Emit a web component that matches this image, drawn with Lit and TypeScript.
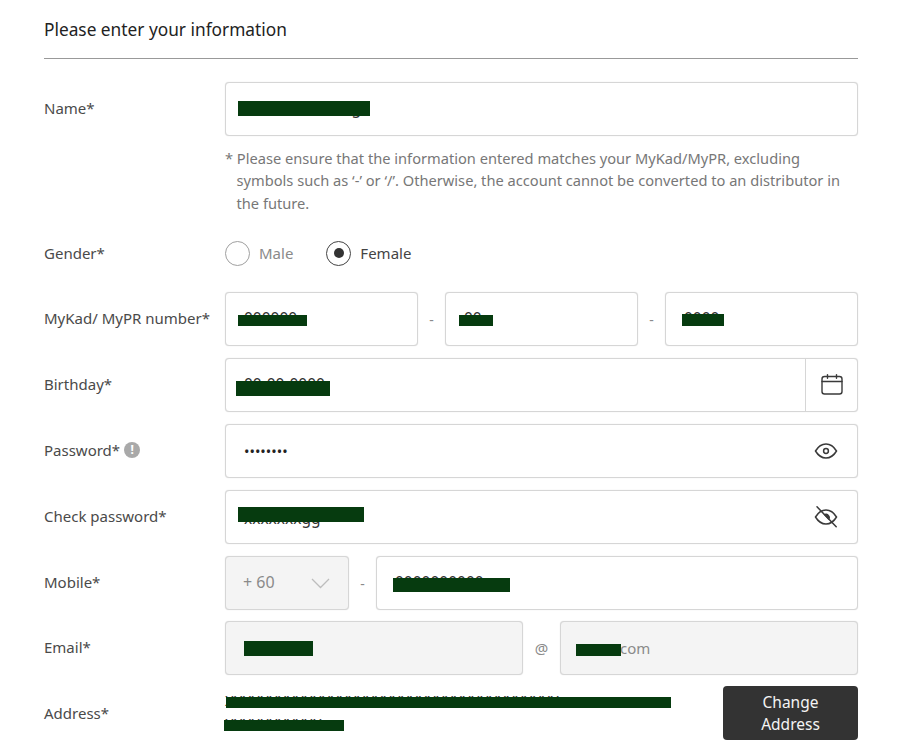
import { LitElement, html, css, svg } from "lit";
import { customElement } from "lit/decorators.js";

type Bar = [number, number, number, number];

const redact = (bars: Bar[]) =>
  bars.map(
    ([l, t, w, h]) =>
      html`<i class="bar" style="left:${l}px;top:${t}px;width:${w}px;height:${h}px"></i>`
  );

const calendar = svg`<svg class="ico" width="24" height="24" viewBox="0 0 24 24" fill="none" stroke="#3a3a3a" stroke-width="1.4" stroke-linecap="round"><rect x="2" y="3.5" width="20" height="17.5" rx="2.5"/><path d="M2 8.5h20M7.5 1.6v3.6M16.5 1.6v3.6"/></svg>`;
const eye = svg`<svg class="ico" width="24" height="24" viewBox="0 0 24 24" fill="none" stroke="#3a3a3a" stroke-width="1.5"><path d="M1.5 12C4 7.8 7.8 5 12 5S20 7.8 22.5 12C20 16.2 16.2 19 12 19S4 16.2 1.5 12Z"/><circle cx="12" cy="12" r="2.4"/></svg>`;
const eyeOff = svg`<svg class="ico" width="24" height="24" viewBox="0 0 24 24" fill="none" stroke="#3a3a3a" stroke-width="1.5"><path d="M1.5 12C4 7.8 7.8 5 12 5S20 7.8 22.5 12C20 16.2 16.2 19 12 19S4 16.2 1.5 12Z"/><path d="M9.5 9.6 14.6 15A3.4 3.4 0 0 0 15 10.2 3.6 3.6 0 0 0 9.5 9.6Z" fill="#3a3a3a" stroke="none"/><path d="M3 1.8 22.2 21.8" stroke-linecap="round"/></svg>`;
const chevron = svg`<svg class="chev" width="19" height="11" viewBox="0 0 19 11" fill="none" stroke="#bdbdbd" stroke-width="1.3"><path d="M1 1 9.5 9.5 18 1"/></svg>`;

@customElement("app-root")
export class AppRoot extends LitElement {
  static styles = css`
    :host {
      display: block;
      width: 900px;
      height: 746px;
      overflow: hidden;
      background: #fff;
      font-family: "Noto Sans", sans-serif;
      font-size: 15px;
      color: #444;
    }
    .page { padding: 0 42px 0 44px; }
    h1 {
      margin: 0;
      height: 59px;
      box-sizing: border-box;
      padding-top: 17px;
      font-size: 17.3px;
      line-height: 26px;
      font-weight: 400;
      color: #222;
      border-bottom: 1px solid #999;
    }
    .rows { display: flex; flex-direction: column; padding-top: 23px; }
    .row {
      display: grid;
      grid-template-columns: 181px 1fr;
      align-items: center;
      margin-bottom: 12px;
    }
    .row.tight { margin-bottom: 11px; }
    .label { display: flex; align-items: center; gap: 4px; color: #4a4a4a; line-height: 22px; white-space: nowrap; padding-bottom: 2px; }
    .label.flush { padding-bottom: 0; }
    .info {
      width: 16px; height: 16px; border-radius: 50%;
      background: #a9a9a9; color: #fff;
      font-size: 12px; font-weight: 700; line-height: 16px; text-align: center;
    }
    .field {
      position: relative;
      box-sizing: border-box;
      height: 54px;
      display: flex;
      align-items: center;
      padding: 0 18px;
      border: 1px solid #d6d6d6;
      box-shadow: 0 0 1px #cfcfcf;
      border-radius: 4px;
      background: #fff;
      color: #333;
      min-width: 0;
    }
    .field.off { background: #f4f4f4; color: #8a8a8a; }
    .field .val { flex: 1; white-space: nowrap; padding-bottom: 3px; font-size: 15.5px; }
    .field .dom { margin-left: 41px; padding-bottom: 1px; font-size: 15px; }
    .field .low { padding-bottom: 0; padding-top: 1px; }
    .bar { position: absolute; background: #063b0f; display: block; }
    .ico { display: block; flex: none; }
    .hint {
      margin: 0 0 26px 181px;
      padding-left: 11.5px;
      text-indent: -11.5px;
      font-size: 14.65px;
      line-height: 22.4px;
      color: #777;
    }
    .gender { height: 26px; margin-bottom: 26px; }
    .radios { display: flex; align-items: center; }
    .radio { width: 25px; height: 25px; box-sizing: border-box; border-radius: 50%; border: 1.5px solid #a0a0a0; display: flex; align-items: center; justify-content: center; flex: none; }
    .radio.on { border-color: #444; }
    .radio.on::after { content: ""; width: 10px; height: 10px; border-radius: 50%; background: #333; }
    .rlabel { margin-left: 9px; }
    .rlabel.male { color: #8a8a8a; margin-right: 33px; }
    .rlabel.female { color: #444; }
    .triple { display: grid; grid-template-columns: 1fr 27px 1fr 27px 1fr; align-items: center; }
    .sep { text-align: center; color: #8a8a8a; font-size: 14px; }
    .sep.at { font-size: 15px; }
    .mobile { display: grid; grid-template-columns: 124px 27px 1fr; align-items: center; }
    .email { display: grid; grid-template-columns: 298px 37px 298px; align-items: center; }
    .select { justify-content: space-between; padding-right: 18px; padding-left: 17px; }
    .code { font-size: 16px; padding-bottom: 2px; }
    .date { padding-right: 0; }
    .cal-btn { align-self: stretch; width: 51px; flex: none; border-left: 1px solid #d6d6d6; display: flex; align-items: center; justify-content: center; }
    .pw { padding-right: 19px; }
    .field .dots { font-size: 14.5px; color: #222; padding-bottom: 1px; }
    .addr { grid-template-columns: 181px 1fr 135px; margin-bottom: 0; }
    .addr-text { position: relative; line-height: 23px; font-size: 15px; color: #333; height: 54px; box-sizing: border-box; padding-top: 3px; white-space: nowrap; }
    button {
      height: 54px; width: 135px;
      border: none; border-radius: 4px;
      background: #333; color: #f4f4f4;
      font: inherit; font-size: 15.5px; line-height: 22.5px;
      padding: 0 24px;
    }
  `;

  render() {
    return html`<div class="page">
      <h1>Please enter your information</h1>
      <div class="rows">
        <div class="row tight">
          <div class="label">Name*</div>
          <div class="field"><span class="val">Xxxxxxxxxxxxxg</span>${redact([[12, 18, 132, 15]])}</div>
        </div>
        <p class="hint">* Please ensure that the information entered matches your MyKad/MyPR, excluding symbols such as ‘-’ or ‘/’. Otherwise, the account cannot be converted to an distributor in the future.</p>

        <div class="row gender">
          <div class="label flush">Gender*</div>
          <div class="radios">
            <span class="radio"></span><span class="rlabel male">Male</span>
            <span class="radio on"></span><span class="rlabel female">Female</span>
          </div>
        </div>

        <div class="row">
          <div class="label">MyKad/ MyPR number*</div>
          <div class="triple">
            <div class="field"><span class="val">000000</span>${redact([[12, 22, 69, 11]])}</div>
            <span class="sep">-</span>
            <div class="field"><span class="val">00</span>${redact([[13, 22, 34, 11]])}</div>
            <span class="sep">-</span>
            <div class="field"><span class="val">0000</span>${redact([[16, 21, 42, 12]])}</div>
          </div>
        </div>

        <div class="row">
          <div class="label">Birthday*</div>
          <div class="field date"><span class="val">00-00-0000</span>${redact([[10, 22, 94, 15]])}<span class="cal-btn">${calendar}</span></div>
        </div>

        <div class="row">
          <div class="label">Password*<span class="info">!</span></div>
          <div class="field pw"><span class="val dots">••••••••</span>${eye}</div>
        </div>

        <div class="row">
          <div class="label">Check password*</div>
          <div class="field pw"><span class="val low">xxxxxxxgg</span>${redact([[12, 16, 126, 15]])}${eyeOff}</div>
        </div>

        <div class="row tight">
          <div class="label">Mobile*</div>
          <div class="mobile">
            <div class="field off select"><span class="code">+ 60</span>${chevron}</div>
            <span class="sep">-</span>
            <div class="field"><span class="val">0000000000</span>${redact([[16, 21, 117, 14]])}</div>
          </div>
        </div>

        <div class="row tight">
          <div class="label">Email*</div>
          <div class="email">
            <div class="field off"><span class="val"></span>${redact([[18, 19, 69, 15]])}</div>
            <span class="sep at">@</span>
            <div class="field off"><span class="val dom">com</span>${redact([[15, 22, 45, 12]])}</div>
          </div>
        </div>

        <div class="row addr">
          <div class="label flush">Address*</div>
          <div class="addr-text">XXXXXXXXXXXXXXXXXXXXXXXXXXXXXXXXXXXXXX<br />XXXXXXXXXXX${redact([[1, 11, 445, 11], [-1, 34, 120, 11]])}</div>
          <button>Change Address</button>
        </div>
      </div>
    </div>`;
  }
}
